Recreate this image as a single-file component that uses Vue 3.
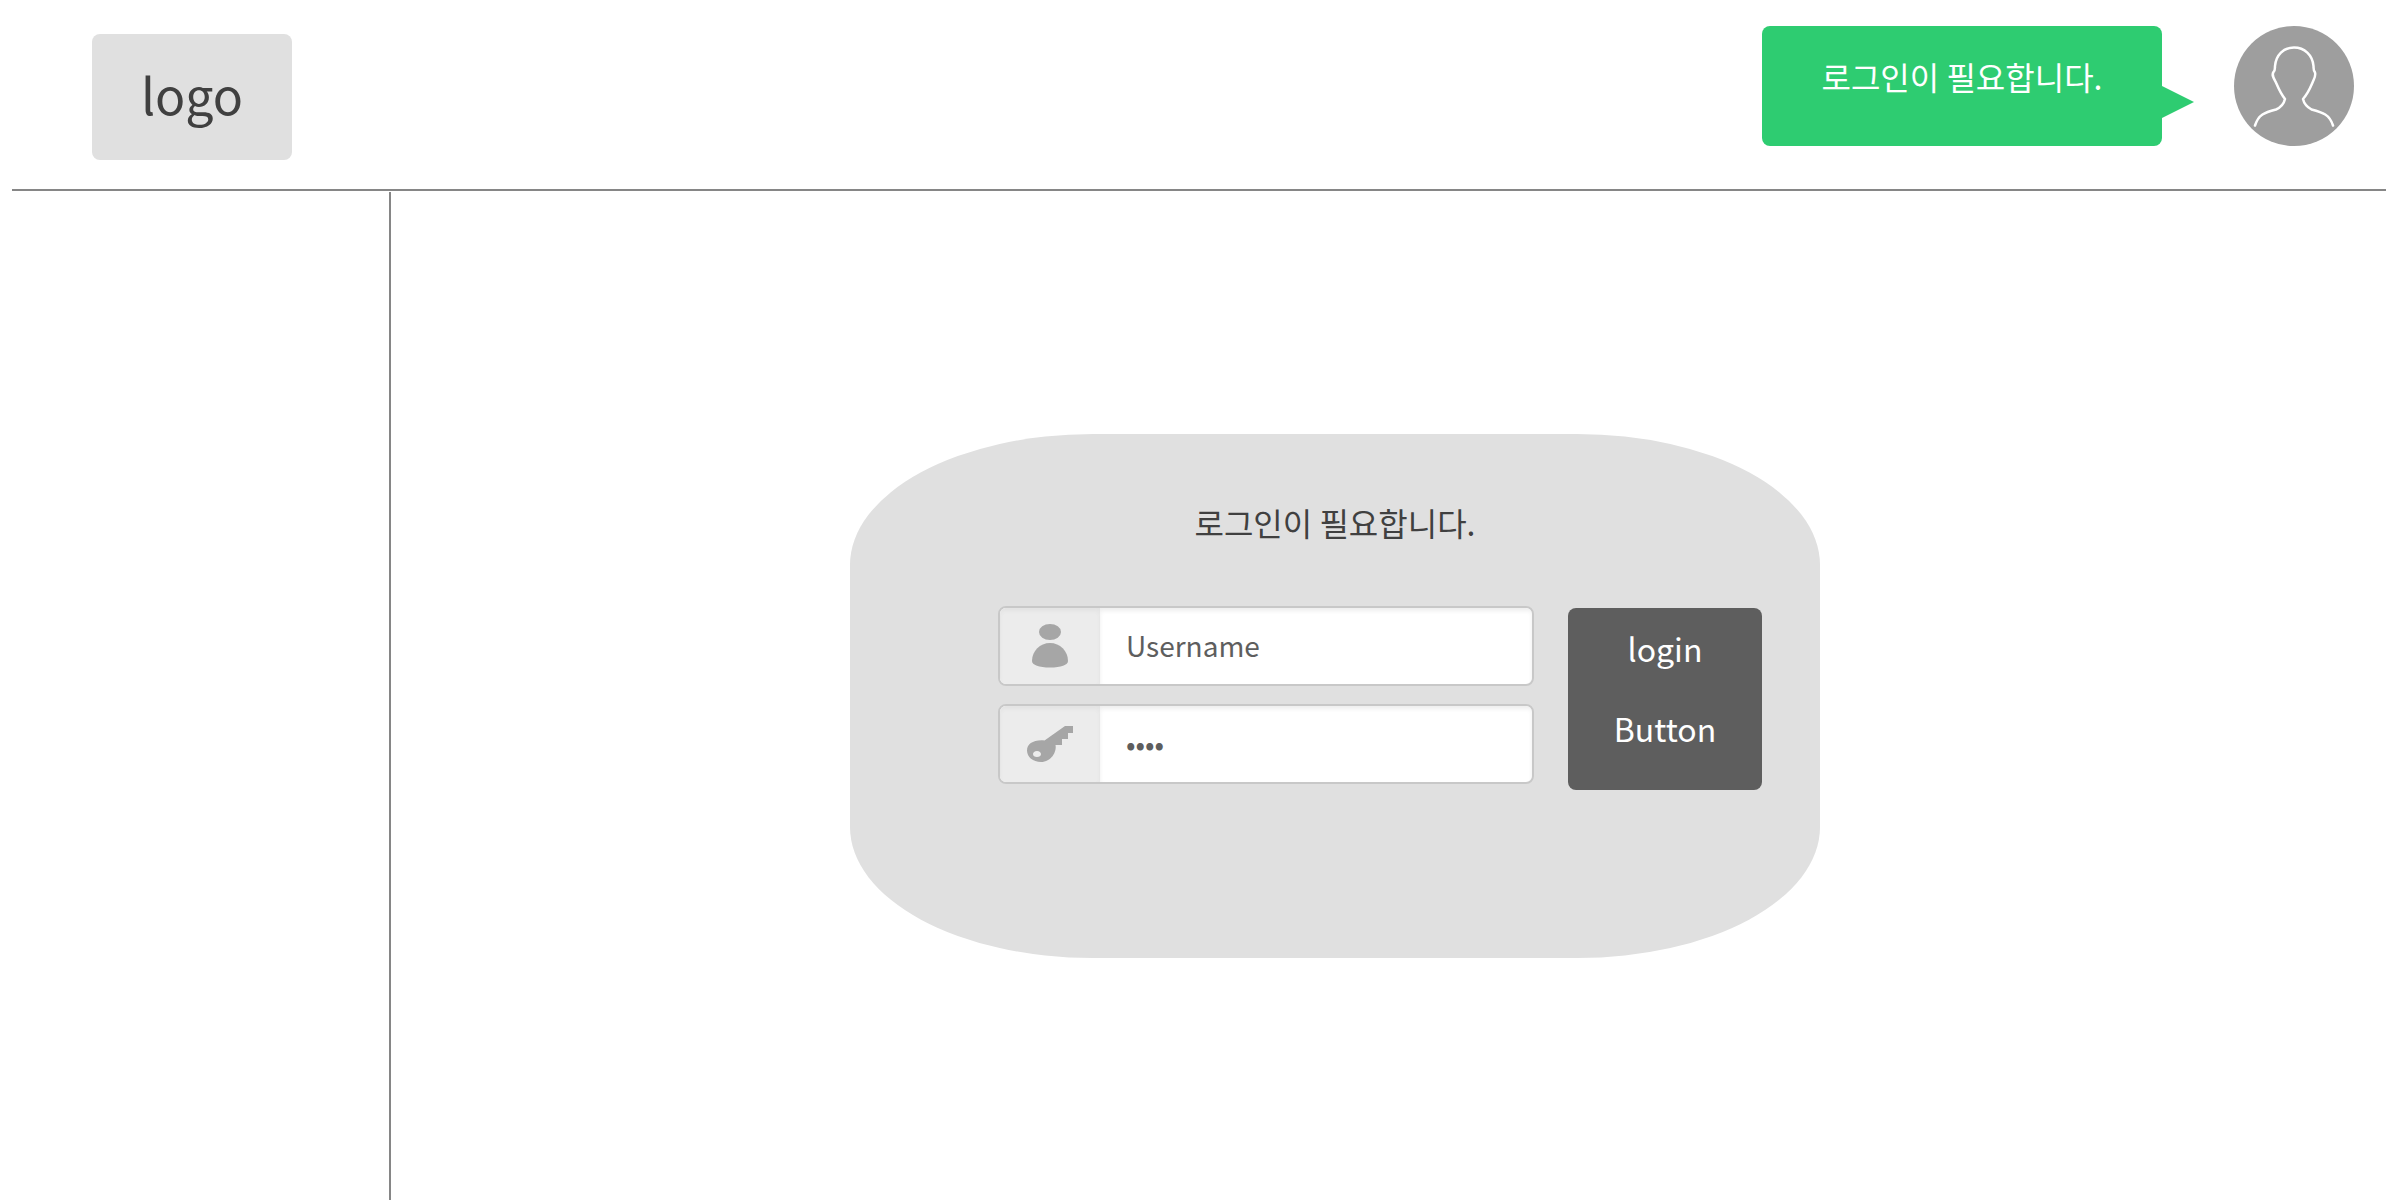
<script setup>
import { ref } from 'vue'

const message = '로그인이 필요합니다.'
const username = ref('')
const password = ref('pass')
</script>

<template>
  <div class="page">
    <header class="header">
      <a class="logo" href="#">logo</a>
      <div class="account">
        <p class="bubble" role="status">{{ message }}</p>
        <button class="avatar" type="button" aria-label="Account">
          <svg viewBox="0 0 120 120" aria-hidden="true">
            <path
              d="M21 99.500C24.500 88.500 30.500 86.500 42 83.500C47.500 81 50 77.500 51 73C46 67 43.500 60 41.500 55.500C39.500 52 37.500 49 39.500 46C41.300 44.500 40.800 43 41 40C42 29 49.500 21.500 60 21.500C70.500 21.500 78.500 29 79.500 40C79.700 43 79.300 44.500 80.800 46C82.300 49 80.500 52 79 55.500C77 60 74.500 67 69 73C70 77.500 73 81 77.500 83.500C89 86.500 95.500 88.500 99 99.500"
              fill="none" stroke="#fff" stroke-width="2.500" stroke-linecap="round" stroke-linejoin="round"
            />
          </svg>
        </button>
      </div>
    </header>

    <div class="body">
      <aside class="sidebar"></aside>
      <main class="content">
        <section class="card">
          <h1 class="title">{{ message }}</h1>
          <form class="form" @submit.prevent>
            <div class="fields">
              <div class="field">
                <label class="addon" for="username" aria-label="Username">
                  <svg width="48" height="48" viewBox="0 0 48 48" aria-hidden="true">
                    <ellipse cx="24" cy="10" rx="11" ry="8" />
                    <path d="M24 21C34 21 42 29 42 39C42 43 35 45.500 24 45.500C13 45.500 6 43 6 39C6 29 14 21 24 21Z" />
                  </svg>
                </label>
                <input id="username" v-model="username" type="text" placeholder="Username" />
              </div>
              <div class="field">
                <label class="addon" for="password" aria-label="Password">
                  <svg width="48" height="48" viewBox="0 0 48 48" aria-hidden="true">
                    <path
                      fill-rule="evenodd"
                      d="M39 6H47V13H42V19H36V25H29.500C31 32 25 42 15 42C7 42 1 37 1 30.500C1 24 7.500 19.500 18.500 20.500ZM11 31C8.500 31 7 32.500 7 34C7 36 8.500 37 11 37C13.500 37 15 36 15 34C15 32.500 13.500 31 11 31Z"
                    />
                  </svg>
                </label>
                <input id="password" v-model="password" type="password" />
              </div>
            </div>
            <button class="submit" type="submit">
              <span>login</span>
              <span>Button</span>
            </button>
          </form>
        </section>
      </main>
    </div>
  </div>
</template>

<style>
body {
  margin: 0;
  background: #fff;
}
</style>

<style scoped>
.page,
.page * {
  box-sizing: border-box;
}

.page {
  display: flex;
  flex-direction: column;
  min-height: 100vh;
  color: #404040;
  font-family: "Noto Sans CJK KR", "Noto Sans", sans-serif;
  font-size: 32px;
}

.header {
  display: flex;
  justify-content: space-between;
  align-items: flex-start;
  margin: 0 14px 0 12px;
  padding: 26px 32px 29px 80px;
  border-bottom: 2px solid #868686;
}

.logo {
  width: 200px;
  margin-top: 8px;
  padding-bottom: 8px;
  border-radius: 8px;
  background: #e0e0e0;
  color: inherit;
  font-size: 50px;
  line-height: 118px;
  text-align: center;
  text-decoration: none;
}

.account {
  display: flex;
  gap: 72px;
}

.bubble {
  position: relative;
  width: 400px;
  height: 120px;
  margin: 0;
  padding-top: 26px;
  border-radius: 8px;
  background: #2ecc71;
  color: #fff;
  line-height: 48px;
  text-align: center;
}

.bubble::after {
  content: "";
  position: absolute;
  top: 60px;
  left: 100%;
  border: 16px solid transparent;
  border-right: 0;
  border-left: 32px solid #2ecc71;
}

.avatar {
  width: 120px;
  height: 120px;
  padding: 0;
  border: 0;
  border-radius: 50%;
  background: #9e9e9e;
}

.avatar svg {
  display: block;
}

.body {
  display: flex;
  flex: 1;
}

.sidebar {
  width: 391px;
  margin-top: 1px;
  border-right: 2px solid #868686;
}

.content {
  display: flex;
  flex: 1;
  align-items: center;
  justify-content: center;
  padding: 1px 121px 0 0;
}

.card {
  width: 100%;
  max-width: 970px;
  padding: 64px 58px 168px 148px;
  border-radius: 25%;
  background: #e0e0e0;
}

.title {
  margin: 0 90px 60px 0;
  font-size: 32px;
  font-weight: 400;
  line-height: 48px;
  text-align: center;
}

.form {
  display: flex;
  gap: 34px;
}

.fields {
  display: flex;
  flex: 1;
  flex-direction: column;
  gap: 18px;
}

.field {
  display: flex;
  height: 80px;
  overflow: hidden;
  border: 2px solid #c8c8c8;
  border-radius: 8px;
  background: #fff;
}

.addon {
  display: flex;
  width: 100px;
  align-items: center;
  justify-content: center;
  background: #ececec;
  box-shadow: inset 0 3px 4px #e2e2e2;
  fill: #a6a6a6;
}

input {
  flex: 1;
  min-width: 0;
  padding: 0 26px 2px;
  border: 0;
  background: transparent;
  box-shadow: inset 0 3px 4px #eee;
  color: #5e5e5e;
  font: inherit;
  font-size: 28px;
  outline: 0;
}

input::placeholder {
  color: inherit;
  opacity: 1;
}

.submit {
  display: flex;
  flex-direction: column;
  align-items: center;
  width: 194px;
  height: 182px;
  margin-top: 2px;
  padding: 0;
  border: 0;
  border-radius: 8px;
  background: #5e5e5e;
  color: #fff;
  font: inherit;
  line-height: 80px;
}
</style>
